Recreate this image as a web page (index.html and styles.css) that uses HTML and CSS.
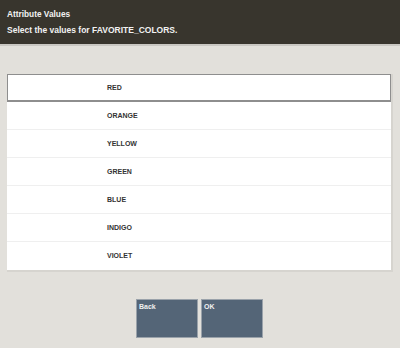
FILE: index.html
```html
<!DOCTYPE html>
<html lang="en">
<head>
    <meta charset="UTF-8">
    <title>Attribute Values</title>
    <link rel="stylesheet" href="styles.css">
</head>
<body>
    <div class="header">
        <div class="title">Attribute Values</div>
        <div class="prompt">Select the values for FAVORITE_COLORS.</div>
    </div>
    <ul class="value-list">
        <li class="selected">RED</li>
        <li>ORANGE</li>
        <li>YELLOW</li>
        <li>GREEN</li>
        <li>BLUE</li>
        <li>INDIGO</li>
        <li>VIOLET</li>
    </ul>
    <div class="buttons">
        <button class="btn">Back</button>
        <button class="btn">OK</button>
    </div>
</body>
</html>
```

FILE: styles.css
```css
* {
    margin: 0;
    padding: 0;
    box-sizing: border-box;
}

body {
    font-family: "Liberation Sans", Arial, sans-serif;
    background: #e2e0db;
    width: 400px;
    height: 348px;
    overflow: hidden;
}

.header {
    background: #38352d;
    color: #f2f2f2;
    height: 46px;
    padding: 9px 0 0 7px;
    border-bottom: 2px solid #c9c7c2;
    font-weight: bold;
}

.title {
    font-size: 8.3px;
    margin-bottom: 6px;
}

.prompt {
    font-size: 8.5px;
}

.value-list {
    list-style: none;
    margin: 28px 7px 0 7px;
    background: #fff;
    border-right: 2px solid #d6d4cf;
    border-bottom: 2px solid #d6d4cf;
}

.value-list li {
    height: 28px;
    line-height: 28px;
    padding-left: 100px;
    font-size: 7px;
    font-weight: bold;
    color: #333;
    border-bottom: 1px solid #efefef;
}

.value-list li:last-child {
    border-bottom: none;
}

.value-list li.selected {
    border: 1px solid #8e8e8e;
    border-bottom-width: 2px;
    line-height: 26px;
    padding-left: 99px;
}

.buttons {
    display: flex;
    justify-content: center;
    gap: 3px;
    margin-top: 27px;
    padding-right: 1px;
}

.btn {
    width: 62px;
    height: 39px;
    background: #546577;
    border: 1px solid #9aa2aa;
    color: #f0f0f0;
    font-family: inherit;
    font-size: 7px;
    font-weight: bold;
    text-align: left;
    display: flex;
    align-items: flex-start;
    padding: 3px 2px;
}
```
